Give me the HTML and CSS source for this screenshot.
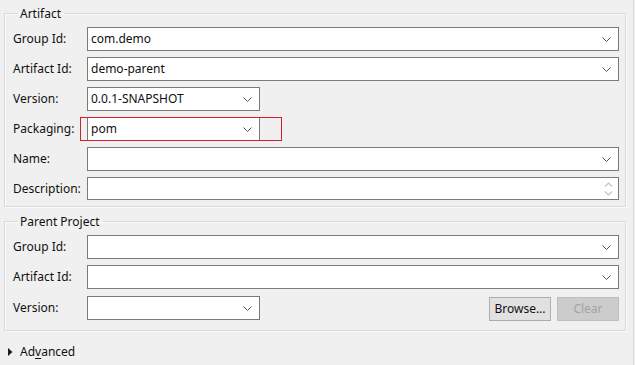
FILE: index.html
```html
<!DOCTYPE html>
<html>
<head>
<meta charset="utf-8">
<link rel="stylesheet" href="styles.css">
</head>
<body>
<div class="page">
  <fieldset class="group group-artifact">
    <legend>Artifact</legend>
    <div class="form">
      <label>Group Id:</label>
      <div class="combo"><span class="val">com.demo</span><svg class="chev" width="9" height="5" viewBox="0 0 9 5"><path d="M0.5 0.5 L4.5 4.5 L8.5 0.5" fill="none" stroke="#555" stroke-width="1"/></svg></div>
      <label>Artifact Id:</label>
      <div class="combo"><span class="val">demo-parent</span><svg class="chev" width="9" height="5" viewBox="0 0 9 5"><path d="M0.5 0.5 L4.5 4.5 L8.5 0.5" fill="none" stroke="#555" stroke-width="1"/></svg></div>
      <label>Version:</label>
      <div class="row-line"><div class="combo short"><span class="val">0.0.1-SNAPSHOT</span><svg class="chev" width="9" height="5" viewBox="0 0 9 5"><path d="M0.5 0.5 L4.5 4.5 L8.5 0.5" fill="none" stroke="#555" stroke-width="1"/></svg></div></div>
      <label>Packaging:</label>
      <div class="row-line"><div class="combo short marked"><span class="val">pom</span><svg class="chev" width="9" height="5" viewBox="0 0 9 5"><path d="M0.5 0.5 L4.5 4.5 L8.5 0.5" fill="none" stroke="#555" stroke-width="1"/></svg><span class="mark"></span></div></div>
      <label>Name:</label>
      <div class="combo"><span class="val"></span><svg class="chev" width="9" height="5" viewBox="0 0 9 5"><path d="M0.5 0.5 L4.5 4.5 L8.5 0.5" fill="none" stroke="#555" stroke-width="1"/></svg></div>
      <label>Description:</label>
      <div class="combo desc"><span class="val"></span><svg class="spin" width="9" height="16" viewBox="0 0 9 16"><path d="M1 5.5 L4.5 2 L8 5.5" fill="none" stroke="#c4c4c4" stroke-width="1.2"/><path d="M1 10.5 L4.5 14 L8 10.5" fill="none" stroke="#c4c4c4" stroke-width="1.2"/></svg></div>
    </div>
  </fieldset>

  <fieldset class="group group-parent">
    <legend>Parent Project</legend>
    <div class="form">
      <label>Group Id:</label>
      <div class="combo"><span class="val"></span><svg class="chev" width="9" height="5" viewBox="0 0 9 5"><path d="M0.5 0.5 L4.5 4.5 L8.5 0.5" fill="none" stroke="#555" stroke-width="1"/></svg></div>
      <label>Artifact Id:</label>
      <div class="combo"><span class="val"></span><svg class="chev" width="9" height="5" viewBox="0 0 9 5"><path d="M0.5 0.5 L4.5 4.5 L8.5 0.5" fill="none" stroke="#555" stroke-width="1"/></svg></div>
      <label>Version:</label>
      <div class="row-line">
        <div class="combo short"><span class="val"></span><svg class="chev" width="9" height="5" viewBox="0 0 9 5"><path d="M0.5 0.5 L4.5 4.5 L8.5 0.5" fill="none" stroke="#555" stroke-width="1"/></svg></div>
        <div class="buttons">
          <button class="btn">Browse...</button>
          <button class="btn disabled">Clear</button>
        </div>
      </div>
    </div>
  </fieldset>

  <div class="advanced">
    <svg class="tri" width="5" height="8" viewBox="0 0 5 8"><path d="M0 0 L4.5 4 L0 8 Z" fill="#1a1a1a"/></svg>
    <span>Ad<u>v</u>anced</span>
  </div>
</div>
</body>
</html>
```
FILE: styles.css
```css
html, body {
  margin: 0;
  padding: 0;
  background: #f0f0f0;
}
body {
  font-family: "Noto Sans", "Open Sans", "Liberation Sans", sans-serif;
  font-size: 12px;
  color: #111;
  width: 635px;
  height: 365px;
  overflow: hidden;
}
.page {
  padding: 5px 7px 0 4px;
  border-right: 1px solid #dadada;
  height: 365px;
  box-sizing: border-box;
  width: 634px;
}
.group {
  margin: 0;
  border: 1px solid #d9d9d9;
  box-shadow: inset 1px 1px 0 #fbfbfb, 1px 1px 0 #fbfbfb;
  padding: 6px 6px 6px 8px;
  min-width: 0;
}
.group legend {
  padding: 0 3px 0 2px;
  margin-left: 5px;
  line-height: 17px;
  height: 16px;
}
.group-parent {
  margin-top: 6px;
  padding-bottom: 9px;
}
.form {
  display: grid;
  grid-template-columns: 74px 1fr;
  row-gap: 6px;
  align-items: center;
}
.form label {
  line-height: 16px;
  white-space: nowrap;
}
.combo {
  position: relative;
  height: 24px;
  box-sizing: border-box;
  border: 1px solid #7a7a7a;
  background: #fff;
  display: flex;
  align-items: center;
  padding: 0 7px 0 3px;
}
.combo .val {
  flex: 1;
  line-height: 16px;
}
.combo.short {
  width: 173px;
}
.combo.desc {
  height: 23px;
  padding-right: 5px;
}
.chev {
  display: block;
  margin-top: 1px;
}
.spin {
  display: block;
}
.row-line {
  display: flex;
  align-items: center;
  justify-self: stretch;
}
.mark {
  position: absolute;
  left: -8px;
  top: -1px;
  width: 200px;
  height: 22px;
  border: 1px solid #d0212c;
  pointer-events: none;
}
.buttons {
  margin-left: auto;
  display: flex;
  gap: 6px;
  margin-top: 2px;
}
.btn {
  font: inherit;
  height: 24px;
  box-sizing: border-box;
  border: 1px solid #adadad;
  background: #e1e1e1;
  color: #111;
  padding: 0;
  width: 62px;
  line-height: 16px;
}
.btn.disabled {
  background: #cccccc;
  border-color: #bfbfbf;
  color: #a3a3a3;
}
.advanced {
  display: flex;
  align-items: center;
  gap: 7px;
  padding-left: 4px;
  margin-top: 13px;
  line-height: 16px;
}
.tri {
  display: block;
}
.advanced u {
  text-decoration-thickness: 1px;
  text-underline-offset: 2px;
}
```
